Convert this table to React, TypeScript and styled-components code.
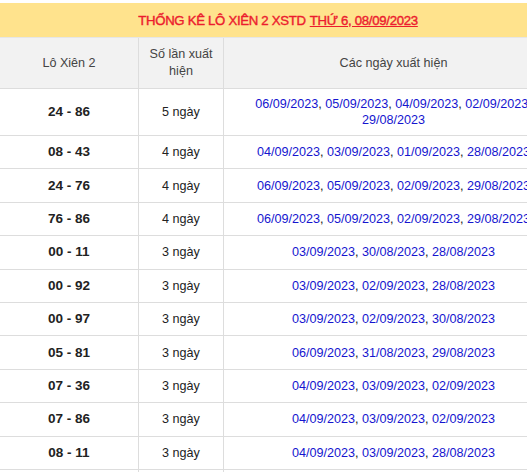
import React from "react";
import styled, { createGlobalStyle } from "styled-components";

const Global = createGlobalStyle`
  html, body { margin: 0; padding: 0; overflow: hidden; background: #fff; }
  body { font-family: "Liberation Sans", Arial, sans-serif; }
`;

const Page = styled.div`
  padding-top: 3px;
  width: 563px;
`;

const Title = styled.div`
  background: #ffe38d;
  height: 35px;
  width: 556px;
  display: flex;
  align-items: center;
  justify-content: center;
  color: #ec1c2e;
  font-weight: normal;
  font-size: 13.2px;
  letter-spacing: -0.3px;
  -webkit-text-stroke: 0.4px #ec1c2e;
  border-bottom: 1px solid #e6e6e6;
  box-sizing: border-box;
`;

const TitleLink = styled.span`
  text-decoration: underline;
  margin-left: 4px;
`;

const Row = styled.div<{ $h: number; $head?: boolean }>`
  display: grid;
  grid-template-columns: 139px 85px 1fr;
  height: ${(p) => p.$h}px;
  background: ${(p) => (p.$head ? "#f2f2f2" : "#fff")};
  border-bottom: 1px solid #dddddd;
  box-sizing: border-box;
`;

const Cell = styled.div<{ $bold?: boolean; $head?: boolean }>`
  display: flex;
  align-items: center;
  justify-content: center;
  text-align: center;
  padding: 0 8px;
  border-right: 1px solid #dddddd;
  font-size: ${(p) => (p.$bold ? "13.5px" : "12.6px")};
  font-weight: ${(p) => (p.$bold ? "bold" : "normal")};
  color: ${(p) => (p.$head ? "#444" : "#222")};
  line-height: ${(p) => (p.$head ? "17px" : "16px")};
  &:last-child { border-right: none; }
`;

const Dates = styled.div`
  font-size: 12.6px;
  line-height: 16px;
  color: #222;
`;

const DateLink = styled.span`
  color: #1515cf;
`;

const data: [string, number, string[]][] = [
  ["24 - 86", 5, ["06/09/2023", "05/09/2023", "04/09/2023", "02/09/2023", "29/08/2023"]],
  ["08 - 43", 4, ["04/09/2023", "03/09/2023", "01/09/2023", "28/08/2023"]],
  ["24 - 76", 4, ["06/09/2023", "05/09/2023", "02/09/2023", "29/08/2023"]],
  ["76 - 86", 4, ["06/09/2023", "05/09/2023", "02/09/2023", "29/08/2023"]],
  ["00 - 11", 3, ["03/09/2023", "30/08/2023", "28/08/2023"]],
  ["00 - 92", 3, ["03/09/2023", "02/09/2023", "28/08/2023"]],
  ["00 - 97", 3, ["03/09/2023", "02/09/2023", "30/08/2023"]],
  ["05 - 81", 3, ["06/09/2023", "31/08/2023", "29/08/2023"]],
  ["07 - 36", 3, ["04/09/2023", "03/09/2023", "02/09/2023"]],
  ["07 - 86", 3, ["04/09/2023", "03/09/2023", "02/09/2023"]],
  ["08 - 11", 3, ["04/09/2023", "03/09/2023", "28/08/2023"]],
  ["11 - 28", 3, ["04/09/2023", "03/09/2023", "28/08/2023"]],
];

export default function App() {
  return (
    <>
      <Global />
      <Page>
        <Title>
          THỐNG KÊ LÔ XIÊN 2 XSTD<TitleLink>THỨ 6, 08/09/2023</TitleLink>
        </Title>
        <Row $h={51} $head>
          <Cell $head>Lô Xiên 2</Cell>
          <Cell $head>Số lần xuất hiện</Cell>
          <Cell $head>Các ngày xuất hiện</Cell>
        </Row>
        {data.map(([pair, n, dates], i) => (
          <Row key={pair} $h={i === 0 ? 47 : 33.4}>
            <Cell $bold>{pair}</Cell>
            <Cell>{n} ngày</Cell>
            <Cell>
              <Dates>
                {dates.map((d, j) => (
                  <React.Fragment key={d + j}>
                    <DateLink>{d}</DateLink>
                    {j < dates.length - 1 ? ", " : ""}
                  </React.Fragment>
                ))}
              </Dates>
            </Cell>
          </Row>
        ))}
      </Page>
    </>
  );
}
